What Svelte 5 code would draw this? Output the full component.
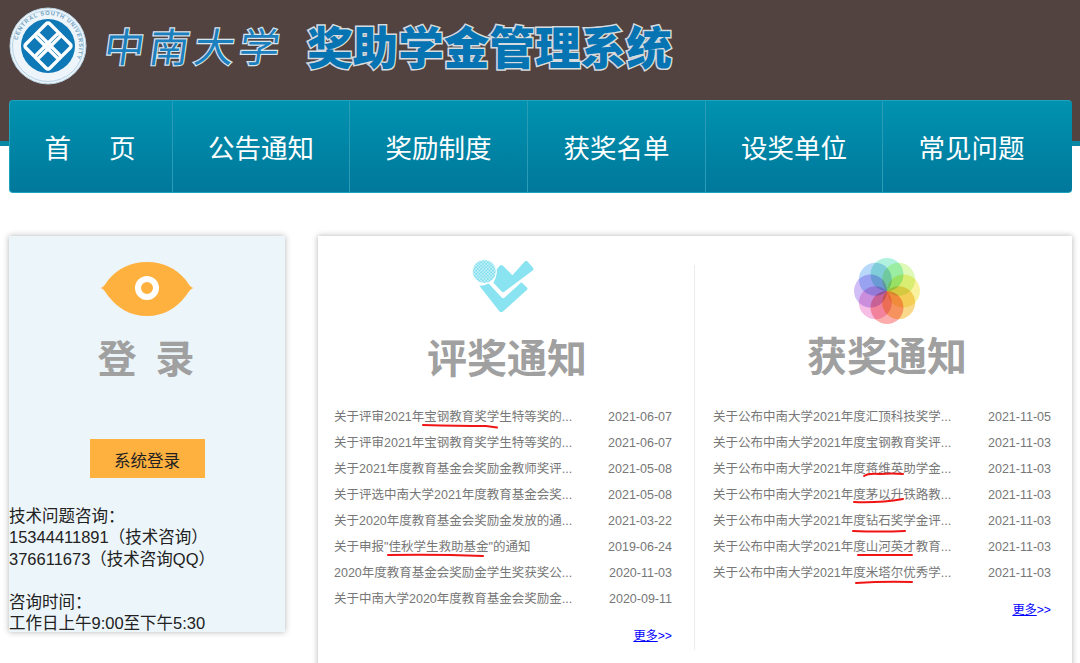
<script>
  const navItems = ['公告通知', '奖励制度', '获奖名单', '设奖单位', '常见问题'];
  const leftRows = [
    ['关于评审2021年宝钢教育奖学生特等奖的...', '2021-06-07'],
    ['关于评审2021年宝钢教育奖学生特等奖的...', '2021-06-07'],
    ['关于2021年度教育基金会奖励金教师奖评...', '2021-05-08'],
    ['关于评选中南大学2021年度教育基金会奖...', '2021-05-08'],
    ['关于2020年度教育基金会奖励金发放的通...', '2021-03-22'],
    ['关于申报"佳秋学生救助基金"的通知', '2019-06-24'],
    ['2020年度教育基金会奖励金学生奖获奖公...', '2020-11-03'],
    ['关于中南大学2020年度教育基金会奖励金...', '2020-09-11']
  ];
  const prefix = '关于公布中南大学2021年度';
  const rightRows = [
    [prefix + '汇顶科技奖学...', '2021-11-05'],
    [prefix + '宝钢教育奖评...', '2021-11-03'],
    [prefix + '蒋维英助学金...', '2021-11-03'],
    [prefix + '茅以升铁路教...', '2021-11-03'],
    [prefix + '钻石奖学金评...', '2021-11-03'],
    [prefix + '山河英才教育...', '2021-11-03'],
    [prefix + '米塔尔优秀学...', '2021-11-03']
  ];
  const petals = ['#a0f0d8', '#d8f8a8', '#f8f088', '#f8d070', '#fa9a9a', '#f4b0e0', '#c8b0f4', '#a8d0f8'];
  const marks = [
    'M423 425 Q460 426 486 426 L497 427.5',
    'M388 555 Q435 554 483 556',
    'M864 476 Q868 473 880 474 Q892 473 903 474',
    'M854 502 Q880 503 903 499',
    'M853 531 Q880 532 905 531',
    'M858 555 Q885 555 912 555',
    'M856 583 Q885 581 912 582'
  ];
</script>

<div class="app">
  <header class="top">
    <svg class="seal" viewBox="0 0 78 78" width="78" height="78" aria-hidden="true">
      <defs>
        <path id="ring" d="M39 39 m-31 0 a31 31 0 1 1 62 0 a31 31 0 1 1 -62 0" />
      </defs>
      <circle cx="39" cy="39" r="38" fill="#eef5fa" stroke="#b9d4e6" stroke-width="1" />
      <circle cx="39" cy="39" r="35.5" fill="none" stroke="#8fbcd8" stroke-width="0.6" />
      <text class="ringtext"><textPath href="#ring" startOffset="3%">CENTRAL SOUTH UNIVERSITY</textPath></text>
      <circle cx="39" cy="39" r="27" fill="#0f78b6" />
      <g transform="rotate(45 39 39)" fill="none" stroke="#fff" stroke-width="3.4">
        <rect x="22" y="22" width="19" height="19" rx="2.5" />
        <rect x="37" y="22" width="19" height="19" rx="2.5" />
        <rect x="22" y="37" width="19" height="19" rx="2.5" />
        <rect x="37" y="37" width="19" height="19" rx="2.5" />
      </g>
    </svg>
    <div class="school">中南大学</div>
    <div class="system">奖助学金管理系统</div>
  </header>

  <div class="navband">
    <nav class="nav">
      <a class="home"><span>首</span><span>页</span></a>
      {#each navItems as item}
        <a>{item}</a>
      {/each}
    </nav>
  </div>

  <main class="main">
    <aside class="side">
      <svg class="eye" viewBox="-2 0 94 56" width="94" height="56" aria-hidden="true">
        <path d="M-2 27 C2 27 4 21 8 17 C16 8 28 1 45 1 C62 1 74 8 82 17 C86 21 88 27 92 27 C88 27 86 33 82 37 C74 47 62 55 45 55 C28 55 16 47 8 37 C4 33 2 27 -2 27 Z" fill="#ffb13f" />
        <circle cx="45" cy="27" r="9" fill="#ffb13f" stroke="#fff" stroke-width="6" />
      </svg>
      <h2 class="login-title">登 录</h2>
      <button class="login-btn">系统登录</button>
      <div class="info">
        <p>技术问题咨询：</p>
        <p>15344411891（技术咨询）</p>
        <p>376611673（技术咨询QQ）</p>
        <p>&nbsp;</p>
        <p>咨询时间：</p>
        <p>工作日上午9:00至下午5:30</p>
      </div>
    </aside>

    <section class="panel">
      <div class="col col-left">
        <div class="head">
          <svg class="check" viewBox="460 55 195 170" width="65" height="57" aria-hidden="true">
            <defs>
              <pattern id="dots" width="10" height="10" patternUnits="userSpaceOnUse">
                <rect width="10" height="10" fill="#c6f2f8" />
                <circle cx="2.5" cy="2.5" r="2.6" fill="#6fdaeb" />
                <circle cx="7.5" cy="7.5" r="2.6" fill="#6fdaeb" />
              </pattern>
            </defs>
            <path d="M543 78 Q548 73 553 78 L581 106 L619 64 Q622 61 626 64 L643 84 Q646 88 643 91 L558 155 Q553 159 549 155 L524 129 Q536 110 533 90 Z" fill="#8ae3f0" />
            <path d="M482 138 Q497 138 510 131 L549 173 Q553 178 558 173 L608 127 L625 143 Q628 147 625 150 L553 215 Q547 219 542 214 Z" fill="#8ae3f0" />
            <circle cx="497" cy="95" r="36" fill="url(#dots)" stroke="#fff" stroke-width="3" />
          </svg>
          <h2>评奖通知</h2>
        </div>
        <ul class="list">
          {#each leftRows as [title, date]}
            <li><span>{title}</span><time>{date}</time></li>
          {/each}
        </ul>
        <a class="more"><u>更多</u>&gt;&gt;</a>
      </div>

      <div class="col col-right">
        <div class="head">
          <svg class="flower" viewBox="0 0 70 70" width="70" height="70" aria-hidden="true">
            {#each petals as color, i}
              <circle class="petal" cx="35" cy="18.5" r="16.5" fill={color} transform="rotate({i * 45} 35 35)" />
            {/each}
          </svg>
          <h2>获奖通知</h2>
        </div>
        <ul class="list">
          {#each rightRows as [title, date]}
            <li><span>{title}</span><time>{date}</time></li>
          {/each}
        </ul>
        <a class="more"><u>更多</u>&gt;&gt;</a>
      </div>
    </section>

    <svg class="marks" viewBox="0 0 1080 663" width="1080" height="663" aria-hidden="true">
      {#each marks as d}
        <path {d} fill="none" stroke="#f01414" stroke-width="2" stroke-linecap="round" />
      {/each}
    </svg>
  </main>
</div>

<style>
  :global(body) {
    margin: 0;
    background: #fff;
  }
  .app {
    position: relative;
    width: 1080px;
    height: 663px;
    overflow: hidden;
    font-family: "Liberation Sans", "Noto Sans CJK SC", sans-serif;
  }
  .top {
    height: 100px;
    background: #524340;
    display: flex;
    align-items: flex-start;
    box-sizing: border-box;
    padding: 7px 0 0 9px;
  }
  .ringtext {
    font: 700 5.6px "Liberation Sans", sans-serif;
    letter-spacing: 0.9px;
    fill: #6b9dc0;
  }
  .school {
    margin: 13px 0 0 18px;
    font: 400 40px/50px "Noto Sans CJK SC", sans-serif;
    letter-spacing: 5px;
    color: #1b80bd;
    -webkit-text-stroke: 2.4px #d8e4ec;
    paint-order: stroke fill;
    transform: skewX(-8deg);
    white-space: nowrap;
  }
  .system {
    margin: 13px 0 0 22px;
    font: 900 45.6px/50px "Noto Sans CJK SC", sans-serif;
    color: #0674b3;
    -webkit-text-stroke: 3px #d5dbde;
    paint-order: stroke fill;
    white-space: nowrap;
  }
  .navband {
    background: linear-gradient(#524340 0 41px, #0b87a6 41px 46px, #fff 46px);
    padding: 0 8px 0 9px;
  }
  .nav {
    height: 93px;
    box-sizing: border-box;
    display: grid;
    grid-template-columns: 163px 177px 178px 178px 177px 1fr;
    border-radius: 4px;
    border: 1px solid #1fa3bd;
    border-width: 1px 0 1px 1px;
    background: linear-gradient(#0092b0, #00789b);
  }
  .nav a {
    display: flex;
    align-items: center;
    justify-content: center;
    color: #fff;
    font-size: 26.5px;
    border-right: 1px solid #2a9cb5;
  }
  .nav a:last-child {
    border-right: 0;
    padding-right: 12px;
  }
  .nav .home {
    gap: 38px;
    padding-right: 2px;
  }
  .main {
    margin-top: 43px;
    padding: 0 8px 0 9px;
    display: flex;
    gap: 33px;
    align-items: flex-start;
  }
  .side {
    width: 276px;
    height: 396px;
    flex: none;
    box-sizing: border-box;
    padding: 25px 0 0;
    background: #ecf5f9;
    box-shadow: 0 0 6px rgba(0, 0, 0, 0.3);
    display: flex;
    flex-direction: column;
    align-items: center;
  }
  .side > * {
    flex: none;
  }
  .login-title {
    margin: 14px 2px 0 0;
    font: 700 39px/50px "Noto Sans CJK SC", sans-serif;
    color: #a0a0a0;
    word-spacing: 10px;
  }
  .login-btn {
    margin: 58px 0 0;
    width: 115px;
    height: 39px;
    border: 0;
    padding: 3px 0 0;
    background: #ffb13f;
    color: #222;
    font: 400 16.5px "Noto Sans CJK SC", sans-serif;
  }
  .info {
    align-self: stretch;
    margin-top: 28px;
    font-size: 16.5px;
    line-height: 21.4px;
    color: #222;
  }
  .info p {
    margin: 0;
    white-space: nowrap;
  }
  .panel {
    width: 754px;
    height: 460px;
    flex: none;
    background: #fff;
    box-shadow: 0 0 6px rgba(0, 0, 0, 0.3);
    display: flex;
  }
  .col {
    box-sizing: border-box;
    display: flex;
    flex-direction: column;
  }
  .col-left {
    width: 377px;
    padding: 22px 23px 0 16px;
  }
  .col-right {
    width: 377px;
    padding: 20px 21px 0 18px;
    position: relative;
  }
  .col-right::before {
    content: "";
    position: absolute;
    left: -1px;
    top: 29px;
    height: 385px;
    width: 1px;
    background: #ececec;
  }
  .head {
    display: flex;
    flex-direction: column;
    align-items: center;
  }
  .col-left .head {
    margin-left: 8px;
    height: 146px;
  }
  .col-right .head {
    margin-left: 10px;
    height: 148px;
  }
  .check {
    height: 57px;
    margin-left: -5px;
  }
  .flower {
    isolation: isolate;
  }
  .petal {
    mix-blend-mode: multiply;
    opacity: 0.82;
  }
  .col-right .head h2 {
    margin-top: 3px;
  }
  .head h2 {
    margin: 16px 0 0;
    font: 700 40px/50px "Noto Sans CJK SC", sans-serif;
    color: #a0a0a0;
    white-space: nowrap;
  }
  .list {
    list-style: none;
    margin: 0;
    padding: 0;
    font-size: 12.5px;
    color: #777;
  }
  .list li {
    height: 26px;
    line-height: 26px;
    display: flex;
    justify-content: space-between;
    white-space: nowrap;
  }
  .more {
    align-self: flex-end;
    margin-top: 16px;
    font-size: 12.2px;
    line-height: 16px;
    color: #00f;
  }
  .marks {
    position: absolute;
    left: 0;
    top: 0;
    pointer-events: none;
  }
</style>
